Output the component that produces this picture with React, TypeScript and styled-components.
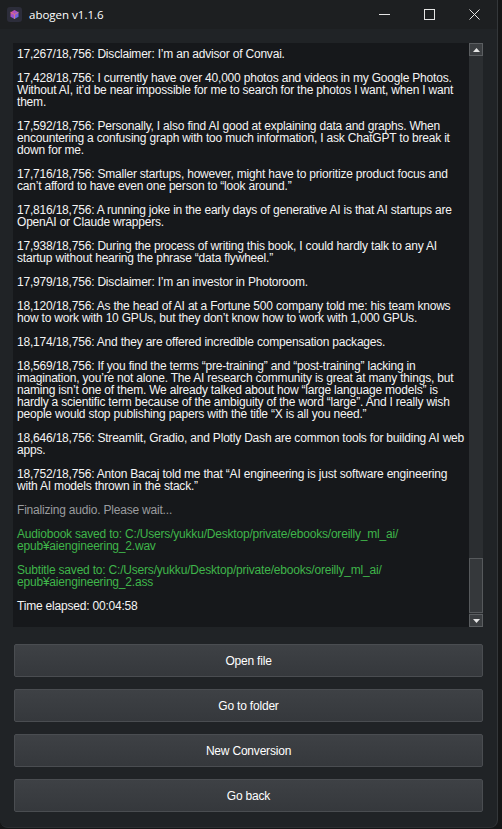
import React from 'react';
import styled, { createGlobalStyle } from 'styled-components';

const GlobalStyle = createGlobalStyle`
  html, body {
    margin: 0;
    padding: 0;
    background: #151617;
    overflow: hidden;
  }
  #root {
    height: 829px;
  }
`;

const Window = styled.div`
  width: 497px;
  height: 827px;
  display: flex;
  flex-direction: column;
  background: #202326;
  border-right: 1px solid #34373a;
  border-bottom: 1px solid #2c2f32;
  border-radius: 0 0 8px 8px;
  overflow: hidden;
  font-family: 'Liberation Sans', Arial, sans-serif;
`;

const TitleBar = styled.div`
  height: 29px;
  flex-shrink: 0;
  display: flex;
  align-items: center;
  background: #1d1f21;
  padding-left: 7px;
`;

const AppTitle = styled.span`
  margin-left: 7px;
  font-family: 'Open Sans', 'Noto Sans', sans-serif;
  font-size: 11.5px;
  color: #ffffff;
  flex: 1;
`;

const Controls = styled.div`
  display: flex;
  height: 100%;
`;

const ControlButton = styled.div`
  width: 45px;
  height: 100%;
  display: flex;
  align-items: center;
  justify-content: center;
`;

const Body = styled.div`
  flex: 1;
  display: flex;
  flex-direction: column;
  padding: 14px 14px 15px 13px;
`;

const LogPanel = styled.div`
  height: 584px;
  display: flex;
  background: #16181b;
`;

const LogText = styled.div`
  flex: 1;
  overflow: hidden;
  padding: 5px 0 0 4px;
  font-size: 12px;
  letter-spacing: -0.2px;
  line-height: 12px;
`;

const Paragraph = styled.div<{ tone: 'normal' | 'muted' | 'ok' }>`
  margin-bottom: 12px;
  color: ${(p) => (p.tone === 'muted' ? '#9a9c9f' : p.tone === 'ok' ? '#3fb54a' : '#f4f4f4')};
`;

const Line = styled.div`
  white-space: nowrap;
  height: 12px;
`;

const ScrollBar = styled.div`
  width: 14px;
  display: flex;
  flex-direction: column;
  background: #2b2e31;
`;

const ArrowButton = styled.div`
  height: 13px;
  box-sizing: border-box;
  border: 1px solid #5b5e61;
  background: #3b3e41;
  display: flex;
  align-items: center;
  justify-content: center;
`;

const Track = styled.div`
  flex: 1;
  display: flex;
  flex-direction: column;
  justify-content: flex-end;
  padding: 0 0 1px;
`;

const Thumb = styled.div`
  height: 55px;
  box-sizing: border-box;
  border: 1px solid #56595c;
  background: #35383b;
`;

const Buttons = styled.div`
  display: flex;
  flex-direction: column;
  gap: 12px;
  margin-top: 17px;
  padding: 0 0 0 1px;
`;

const ActionButton = styled.button`
  height: 33px;
  box-sizing: border-box;
  border: 1px solid #4a4d51;
  border-radius: 2px;
  background: linear-gradient(#3e4145, #35383c);
  color: #ffffff;
  font-family: 'Liberation Sans', Arial, sans-serif;
  font-size: 12px;
  letter-spacing: -0.2px;
  cursor: pointer;
`;

type Entry = { tone: 'normal' | 'muted' | 'ok'; lines: string[] };

const entries: Entry[] = [
  { tone: 'normal', lines: ['17,267/18,756: Disclaimer: I’m an advisor of Convai.'] },
  {
    tone: 'normal',
    lines: [
      '17,428/18,756: I currently have over 40,000 photos and videos in my Google Photos.',
      'Without AI, it’d be near impossible for me to search for the photos I want, when I want',
      'them.',
    ],
  },
  {
    tone: 'normal',
    lines: [
      '17,592/18,756: Personally, I also find AI good at explaining data and graphs. When',
      'encountering a confusing graph with too much information, I ask ChatGPT to break it',
      'down for me.',
    ],
  },
  {
    tone: 'normal',
    lines: [
      '17,716/18,756: Smaller startups, however, might have to prioritize product focus and',
      'can’t afford to have even one person to “look around.”',
    ],
  },
  {
    tone: 'normal',
    lines: [
      '17,816/18,756: A running joke in the early days of generative AI is that AI startups are',
      'OpenAI or Claude wrappers.',
    ],
  },
  {
    tone: 'normal',
    lines: [
      '17,938/18,756: During the process of writing this book, I could hardly talk to any AI',
      'startup without hearing the phrase “data flywheel.”',
    ],
  },
  { tone: 'normal', lines: ['17,979/18,756: Disclaimer: I’m an investor in Photoroom.'] },
  {
    tone: 'normal',
    lines: [
      '18,120/18,756: As the head of AI at a Fortune 500 company told me: his team knows',
      'how to work with 10 GPUs, but they don’t know how to work with 1,000 GPUs.',
    ],
  },
  { tone: 'normal', lines: ['18,174/18,756: And they are offered incredible compensation packages.'] },
  {
    tone: 'normal',
    lines: [
      '18,569/18,756: If you find the terms “pre-training” and “post-training” lacking in',
      'imagination, you’re not alone. The AI research community is great at many things, but',
      'naming isn’t one of them. We already talked about how “large language models” is',
      'hardly a scientific term because of the ambiguity of the word “large”. And I really wish',
      'people would stop publishing papers with the title “X is all you need.”',
    ],
  },
  {
    tone: 'normal',
    lines: [
      '18,646/18,756: Streamlit, Gradio, and Plotly Dash are common tools for building AI web',
      'apps.',
    ],
  },
  {
    tone: 'normal',
    lines: [
      '18,752/18,756: Anton Bacaj told me that “AI engineering is just software engineering',
      'with AI models thrown in the stack.”',
    ],
  },
  { tone: 'muted', lines: ['Finalizing audio. Please wait...'] },
  {
    tone: 'ok',
    lines: [
      'Audiobook saved to: C:/Users/yukku/Desktop/private/ebooks/oreilly_ml_ai/',
      'epub¥aiengineering_2.wav',
    ],
  },
  {
    tone: 'ok',
    lines: [
      'Subtitle saved to: C:/Users/yukku/Desktop/private/ebooks/oreilly_ml_ai/',
      'epub¥aiengineering_2.ass',
    ],
  },
  { tone: 'normal', lines: ['Time elapsed: 00:04:58'] },
];

const AppIcon = () => (
  <svg width="15" height="15" viewBox="0 0 15 15">
    <defs>
      <linearGradient id="cube" x1="0" y1="0" x2="1" y2="1">
        <stop offset="0" stopColor="#e0508a" />
        <stop offset="0.5" stopColor="#9a4fd8" />
        <stop offset="1" stopColor="#3f7be0" />
      </linearGradient>
    </defs>
    <rect x="0" y="0" width="15" height="15" rx="3" fill="#2c2d3a" />
    <path d="M7.5 3 L11.5 5.2 L11.5 9.8 L7.5 12 L3.5 9.8 L3.5 5.2 Z" fill="url(#cube)" />
    <path d="M3.5 5.2 L7.5 7.4 L11.5 5.2 M7.5 7.4 L7.5 12" stroke="#f08a5d" strokeWidth="0.7" fill="none" />
  </svg>
);

const Triangle = ({ up }: { up: boolean }) => (
  <svg width="7" height="4" viewBox="0 0 7 4">
    <path d={up ? 'M0 4 L3.5 0 L7 4 Z' : 'M0 0 L7 0 L3.5 4 Z'} fill="#e6e6e6" />
  </svg>
);

const App = () => (
  <>
    <GlobalStyle />
    <Window>
      <TitleBar>
        <AppIcon />
        <AppTitle>abogen v1.1.6</AppTitle>
        <Controls>
          <ControlButton>
            <svg width="11" height="11" viewBox="0 0 11 11">
              <path d="M0 5.5 H11" stroke="#e4e4e4" strokeWidth="1" />
            </svg>
          </ControlButton>
          <ControlButton>
            <svg width="11" height="11" viewBox="0 0 11 11">
              <rect x="0.5" y="0.5" width="10" height="10" stroke="#e4e4e4" fill="none" strokeWidth="1" />
            </svg>
          </ControlButton>
          <ControlButton>
            <svg width="11" height="11" viewBox="0 0 11 11">
              <path d="M0.5 0.5 L10.5 10.5 M10.5 0.5 L0.5 10.5" stroke="#e4e4e4" strokeWidth="1" />
            </svg>
          </ControlButton>
        </Controls>
      </TitleBar>
      <Body>
        <LogPanel>
          <LogText>
            {entries.map((e, i) => (
              <Paragraph key={i} tone={e.tone}>
                {e.lines.map((l, j) => (
                  <Line key={j}>{l}</Line>
                ))}
              </Paragraph>
            ))}
          </LogText>
          <ScrollBar>
            <ArrowButton>
              <Triangle up />
            </ArrowButton>
            <Track>
              <Thumb />
            </Track>
            <ArrowButton>
              <Triangle up={false} />
            </ArrowButton>
          </ScrollBar>
        </LogPanel>
        <Buttons>
          <ActionButton>Open file</ActionButton>
          <ActionButton>Go to folder</ActionButton>
          <ActionButton>New Conversion</ActionButton>
          <ActionButton>Go back</ActionButton>
        </Buttons>
      </Body>
    </Window>
  </>
);

export default App;
